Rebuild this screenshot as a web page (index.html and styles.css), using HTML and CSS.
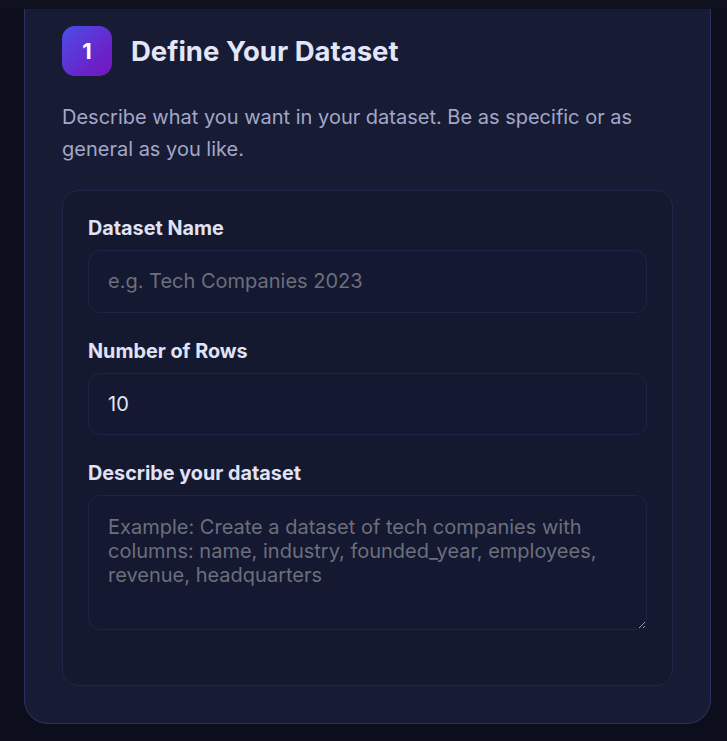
FILE: index.html
```html
<!DOCTYPE html>
<html lang="en">
<head>
<meta charset="utf-8">
<title>Define Your Dataset</title>
<link rel="stylesheet" href="styles.css">
</head>
<body>
<div class="topbar"></div>
<main class="page">
  <section class="card">
    <div class="step-head">
      <div class="badge">1</div>
      <h2 class="step-title">Define Your Dataset</h2>
    </div>
    <p class="step-desc">Describe what you want in your dataset. Be as specific or as general as you like.</p>
    <form class="panel">
      <div class="field">
        <label class="field-label" for="name">Dataset Name</label>
        <input class="field-input" id="name" type="text" placeholder="e.g. Tech Companies 2023">
      </div>
      <div class="field">
        <label class="field-label" for="rows">Number of Rows</label>
        <input class="field-input" id="rows" type="text" value="10">
      </div>
      <div class="field field-last">
        <label class="field-label" for="desc">Describe your dataset</label>
        <textarea class="field-area" id="desc" placeholder="Example: Create a dataset of tech companies with columns: name, industry, founded_year, employees, revenue, headquarters"></textarea>
      </div>
    </form>
  </section>
</main>
</body>
</html>
```
FILE: styles.css
```css
* { box-sizing: border-box; }
html, body { margin: 0; padding: 0; }
body {
  background: #0c0e1b;
  font-family: Inter, "Noto Sans", sans-serif;
  color: #e2e4f7;
  min-height: 741px;
}
.topbar {
  height: 9px;
  background: #0f111f;
}
.page {
  padding: 0 16px 17px 24px;
}
.card {
  background: #171b34;
  border: 1px solid #2b3162;
  border-top: none;
  border-radius: 0 0 24px 24px;
  padding: 17px 37px 37px 37px;
}
.step-head {
  display: flex;
  align-items: center;
  gap: 19px;
}
.badge {
  width: 50px;
  height: 50px;
  border-radius: 13px;
  background: linear-gradient(135deg, #4b4fe6 0%, #6a22c8 70%, #7116c0 100%);
  color: #ffffff;
  display: flex;
  align-items: center;
  justify-content: center;
  font-weight: 700;
  font-size: 22px;
}
.step-title {
  margin: 0;
  font-size: 27.5px;
  line-height: 34px;
  font-weight: 700;
  color: #e3e5f8;
}
.step-desc {
  margin: 25px 0 25px 0;
  font-size: 20px;
  line-height: 32px;
  color: #a3a7c8;
}
.panel {
  background: #151930;
  border: 1px solid #20254a;
  border-radius: 16px;
  padding: 25px 25px 25px 25px;
}
.field {
  margin-bottom: 26px;
}
.field-last {
  margin-bottom: 30px;
}
.field-label {
  display: block;
  font-size: 19.8px;
  line-height: 24px;
  font-weight: 700;
  color: #e0e2f6;
  margin-bottom: 10px;
}
.field-input, .field-area {
  display: block;
  width: 100%;
  background: #141830;
  border: 1px solid #1f2446;
  border-radius: 12px;
  font-family: Inter, "Noto Sans", sans-serif;
  font-size: 20px;
  color: #e3e5f8;
  outline: none;
}
.field-input {
  padding: 19px 19px;
  line-height: 23px;
  height: 62.5px;
}
.field-area {
  padding: 19px 19px;
  line-height: 24px;
  height: 135px;
  resize: vertical;
}
.field-input::placeholder, .field-area::placeholder {
  color: #6c6f7c;
  opacity: 1;
}
```
